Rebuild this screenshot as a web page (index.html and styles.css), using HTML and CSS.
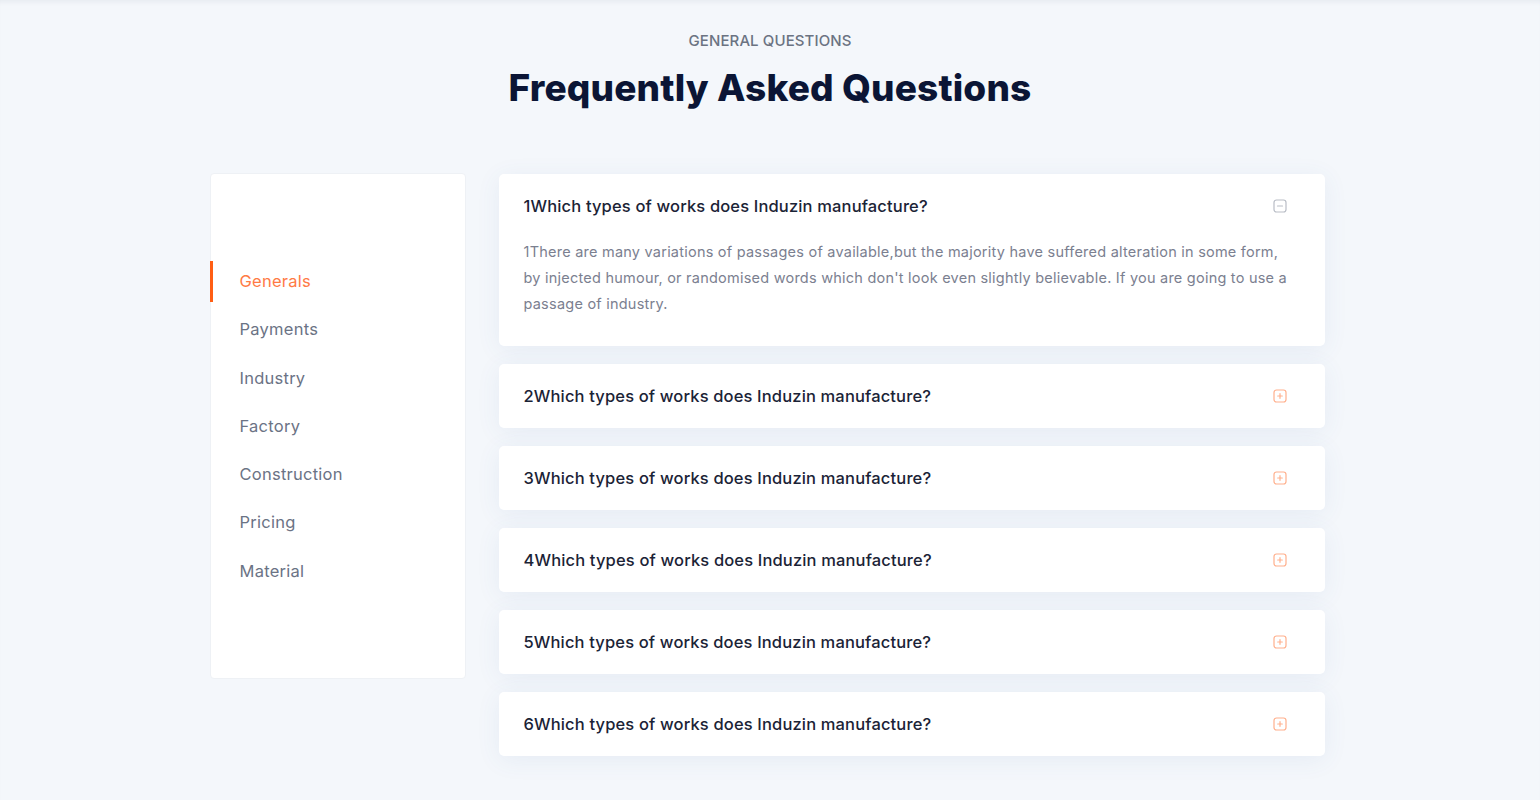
FILE: index.html
```html
<!DOCTYPE html>
<html lang="en">
<head>
<meta charset="utf-8">
<title>FAQ</title>
<link rel="stylesheet" href="styles.css">
</head>
<body>
<section class="faq">
  <header class="faq-head">
    <p class="eyebrow">GENERAL QUESTIONS</p>
    <h1 class="title">Frequently Asked Questions</h1>
  </header>
  <div class="faq-body">
    <aside class="side">
      <ul class="nav">
        <li class="nav-item active">Generals</li>
        <li class="nav-item">Payments</li>
        <li class="nav-item">Industry</li>
        <li class="nav-item">Factory</li>
        <li class="nav-item">Construction</li>
        <li class="nav-item">Pricing</li>
        <li class="nav-item">Material</li>
      </ul>
    </aside>
    <div class="list">
      <div class="card open">
        <div class="q">
          <span class="q-text">1Which types of works does Induzin manufacture?</span>
          <svg class="ico ico-minus" viewBox="0 0 14 14" width="14" height="14"><rect x="1" y="1" width="12" height="12" rx="2.5" fill="none" stroke="currentColor" stroke-width="1.2"/><path d="M4.5 7h5" stroke="currentColor" stroke-width="1.2" stroke-linecap="round"/></svg>
        </div>
        <p class="a">1There are many variations of passages of available,but the majority have suffered alteration in some form, by injected humour, or randomised words which don't look even slightly believable. If you are going to use a passage of industry.</p>
      </div>
      <div class="card">
        <div class="q">
          <span class="q-text">2Which types of works does Induzin manufacture?</span>
          <svg class="ico ico-plus" viewBox="0 0 14 14" width="14" height="14"><rect x="1" y="1" width="12" height="12" rx="2.5" fill="none" stroke="currentColor" stroke-width="1.2"/><path d="M4.7 7h4.6M7 4.7v4.6" stroke="currentColor" stroke-width="1.2" stroke-linecap="round"/></svg>
        </div>
      </div>
      <div class="card">
        <div class="q">
          <span class="q-text">3Which types of works does Induzin manufacture?</span>
          <svg class="ico ico-plus" viewBox="0 0 14 14" width="14" height="14"><rect x="1" y="1" width="12" height="12" rx="2.5" fill="none" stroke="currentColor" stroke-width="1.2"/><path d="M4.7 7h4.6M7 4.7v4.6" stroke="currentColor" stroke-width="1.2" stroke-linecap="round"/></svg>
        </div>
      </div>
      <div class="card">
        <div class="q">
          <span class="q-text">4Which types of works does Induzin manufacture?</span>
          <svg class="ico ico-plus" viewBox="0 0 14 14" width="14" height="14"><rect x="1" y="1" width="12" height="12" rx="2.5" fill="none" stroke="currentColor" stroke-width="1.2"/><path d="M4.7 7h4.6M7 4.7v4.6" stroke="currentColor" stroke-width="1.2" stroke-linecap="round"/></svg>
        </div>
      </div>
      <div class="card">
        <div class="q">
          <span class="q-text">5Which types of works does Induzin manufacture?</span>
          <svg class="ico ico-plus" viewBox="0 0 14 14" width="14" height="14"><rect x="1" y="1" width="12" height="12" rx="2.5" fill="none" stroke="currentColor" stroke-width="1.2"/><path d="M4.7 7h4.6M7 4.7v4.6" stroke="currentColor" stroke-width="1.2" stroke-linecap="round"/></svg>
        </div>
      </div>
      <div class="card">
        <div class="q">
          <span class="q-text">6Which types of works does Induzin manufacture?</span>
          <svg class="ico ico-plus" viewBox="0 0 14 14" width="14" height="14"><rect x="1" y="1" width="12" height="12" rx="2.5" fill="none" stroke="currentColor" stroke-width="1.2"/><path d="M4.7 7h4.6M7 4.7v4.6" stroke="currentColor" stroke-width="1.2" stroke-linecap="round"/></svg>
        </div>
      </div>
    </div>
  </div>
</section>
</body>
</html>
```

FILE: styles.css
```css
* { box-sizing: border-box; }
html, body { margin: 0; padding: 0; }
body {
  background: #f4f7fb;
  font-family: "Inter", "Open Sans", sans-serif;
  color: #1b2336;
}
.faq {
  min-height: 800px;
  box-shadow: inset 0 5px 5px -3px rgba(20, 30, 60, 0.06);
  padding-top: 30px;
}
.faq-head { text-align: center; }
.eyebrow {
  margin: 0;
  font-size: 15px;
  line-height: 22px;
  font-weight: 500;
  color: #6b7382;
  letter-spacing: 0.1px;
}
.title {
  margin: 13px 0 0;
  font-size: 37px;
  line-height: 46px;
  font-weight: 800;
  letter-spacing: 0.15px;
  color: #0b1535;
}
.faq-body {
  display: grid;
  grid-template-columns: 256px 826px;
  column-gap: 33px;
  justify-content: center;
  align-items: start;
  margin-top: 62px;
  padding-right: 6px;
}
.side {
  background: #fff;
  border: 1px solid #eef1f5;
  border-radius: 4px;
  padding: 87px 0 86px;
}
.nav {
  list-style: none;
  margin: 0;
  padding: 0;
  display: flex;
  flex-direction: column;
  gap: 7.3px;
}
.nav-item {
  padding: 8px 0 8px 27px;
  line-height: 25px;
  font-size: 16.5px;
  letter-spacing: 0.25px;
  color: #6b7385;
  border-left: 3px solid transparent;
  margin-left: -1px;
}
.nav-item.active {
  color: #ff7a45;
  border-left-color: #ff5e14;
}
.list {
  display: flex;
  flex-direction: column;
  gap: 18px;
  margin-top: 1px;
}
.card {
  background: #fff;
  border-radius: 5px;
  box-shadow: 0 4px 24px rgba(60, 100, 170, 0.08);
}
.q {
  display: flex;
  align-items: center;
  justify-content: space-between;
  padding: 20px 38px 20px 25px;
}
.q-text {
  font-size: 16.5px;
  line-height: 24px;
  font-weight: 500;
  letter-spacing: 0.15px;
  color: #1b2336;
}
.ico { display: block; flex: none; }
.ico-minus { color: #b9bdc6; }
.ico-plus { color: #ffb08d; }
.a {
  margin: 1px 0 0;
  padding: 0 33px 29px 25px;
  font-size: 14.5px;
  letter-spacing: 0.23px;
  line-height: 26px;
  color: #7b8090;
}
```
